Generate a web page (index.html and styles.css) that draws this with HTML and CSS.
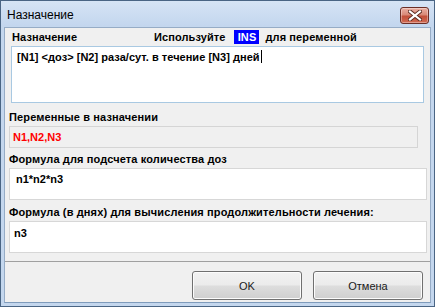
FILE: index.html
```html
<!DOCTYPE html>
<html>
<head>
<meta charset="utf-8">
<link rel="stylesheet" href="styles.css">
</head>
<body>
<div class="window">
  <div class="titlebar">
    <span class="title">Назначение</span>
    <div class="close">
      <svg width="14" height="11" viewBox="0 0 14 11">
        <path d="M2 1.5 L12 9.5 M12 1.5 L2 9.5" stroke="#5a2a20" stroke-width="4" stroke-linecap="square" fill="none"/>
        <path d="M2 1.5 L12 9.5 M12 1.5 L2 9.5" stroke="#ffffff" stroke-width="2.2" stroke-linecap="square" fill="none"/>
      </svg>
    </div>
  </div>
  <div class="client">
    <div class="head">
      <span class="lbl-main">Назначение</span>
      <span class="hint">Используйте <span class="ins">INS</span> для переменной</span>
    </div>
    <div class="field memo">[N1] &lt;доз&gt; [N2] раза/сут. в течение [N3] дней<span class="caret"></span></div>
    <div class="lbl l2">Переменные в назначении</div>
    <div class="field ro">N1,N2,N3</div>
    <div class="lbl l3">Формула для подсчета количества доз</div>
    <div class="field f3">n1*n2*n3</div>
    <div class="lbl l4">Формула (в днях) для вычисления продолжительности лечения:</div>
    <div class="field f4">n3</div>
    <div class="sep"></div>
    <div class="buttons">
      <div class="btn">OK</div>
      <div class="btn">Отмена</div>
    </div>
  </div>
</div>
</body>
</html>
```
FILE: styles.css
```css
* { box-sizing: border-box; }
html, body { margin: 0; padding: 0; background: #ffffff; }
body { font-family: "Liberation Sans", Arial, sans-serif; }

.window {
  width: 435px;
  height: 307px;
  border: 1px solid #4a6584;
  background: #c4d7ee;
  display: flex;
  flex-direction: column;
}

.titlebar {
  height: 25px;
  flex: none;
  display: flex;
  align-items: center;
  justify-content: space-between;
  padding: 0 5px 0 6px;
  background: linear-gradient(#d6e4f5, #c3d6ee);
}
.title {
  font-size: 12px;
  color: #000;
  margin-top: 3px;
}
.close {
  width: 29px;
  height: 17px;
  margin-top: 4px;
  border: 1px solid #6b2e26;
  border-radius: 3px;
  background: linear-gradient(#eab0a3 0%, #d98a78 45%, #c2503a 55%, #d06a52 100%);
  display: flex;
  align-items: center;
  justify-content: center;
  box-shadow: inset 0 0 0 1px rgba(255,255,255,0.35);
}

.client {
  flex: 1;
  margin: 1px 3px 3px 3px;
  border: 1px solid #96acc6;
  background: #f0f0f0;
  padding: 0 0 0 4px;
  display: flex;
  flex-direction: column;
  border-bottom: 1px solid #7f9bbb;
}

.head {
  margin-top: 1px;
  height: 16px;
  display: flex;
  align-items: center;
  font-weight: bold;
  font-size: 11px;
  color: #000;
  letter-spacing: 0.1px;
}
.lbl-main { margin-left: 3px; width: 142px; }
.hint { white-space: pre; }
.ins {
  display: inline-block;
  background: #0000ff;
  color: #fff;
  padding: 1px 3px 1px 4px;
  margin: 0 3px 0 5px;
  line-height: 12px;
}

.field {
  background: #fff;
  border: 1px solid #d7d7d7;
  font-weight: bold;
  font-size: 11px;
  color: #000;
  line-height: 14px;
}
.memo {
  margin-top: 1px;
  margin-left: 2px;
  width: 413px;
  height: 57px;
  border-color: #a9c9e2;
  padding: 3px 5px;
  letter-spacing: 0.03px;
}
.caret {
  display: inline-block;
  width: 1px;
  height: 13px;
  background: #000;
  vertical-align: -2px;
  margin-left: 1px;
}
.lbl {
  font-weight: bold;
  font-size: 11px;
  color: #000;
  height: 14px;
  line-height: 14px;
  letter-spacing: 0.13px;
}
.l2 { margin-top: 7px; }
.ro {
  margin-top: 2px;
  width: 409px;
  height: 22px;
  background: #f0f0f0;
  border-color: #d5d5d5;
  color: #ff0000;
  padding: 3px 3px;
}
.l3 { margin-top: 4px; }
.f3 {
  margin-top: 2px;
  width: 418px;
  height: 32px;
  padding: 3px 6px;
}
.l4 { margin-top: 5px; }
.f4 {
  margin-top: 2px;
  width: 418px;
  height: 32px;
  padding: 4px 4px;
}
.sep {
  margin-top: 8px;
  margin-left: -4px;
  height: 1px;
  background: #a0a0a0;
}
.buttons {
  margin-top: 9px;
  display: flex;
  justify-content: flex-end;
  gap: 11px;
  padding-right: 7px;
}
.btn {
  width: 110px;
  height: 29px;
  border: 1px solid #707070;
  border-radius: 3px;
  background: linear-gradient(#f2f2f2 0%, #ebebeb 48%, #dddddd 52%, #cfcfcf 100%);
  box-shadow: inset 0 0 0 1px #fcfcfc;
  display: flex;
  align-items: center;
  justify-content: center;
  font-size: 11px;
  color: #1a1a1a;
}
```
